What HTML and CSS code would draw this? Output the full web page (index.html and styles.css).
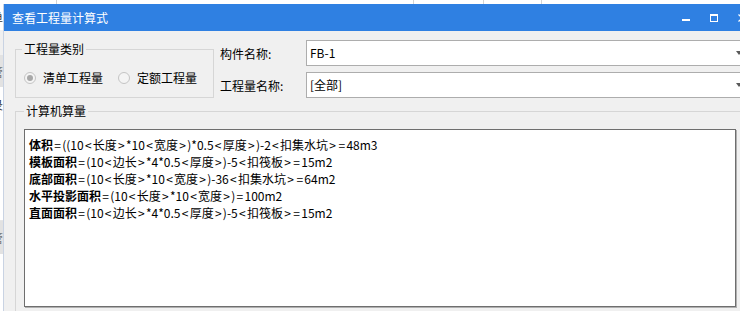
FILE: index.html
```html
<!DOCTYPE html>
<html lang="zh-CN">
<head>
<meta charset="utf-8">
<title>查看工程量计算式</title>
<link rel="stylesheet" href="styles.css">
</head>
<body>
<div class="screen">
  <div class="topstrip">
    <span class="tcell tc1"></span>
    <span class="tcell tc2"></span>
    <span class="tcell tc3"></span>
    <span class="tcell tc4"></span>
    <span class="tcell tc5"></span>
  </div>
  <div class="leftstrip">
    <div class="lblock lb1"><div class="frag"><span>单</span></div></div>
    <div class="lblock lb2"></div>
    <div class="lblock lb3"><div class="frag"><span>管</span></div></div>
    <div class="lblock lb4"><div class="frag fragtop"><span>录</span></div></div>
    <div class="lblock lb5"><div class="frag"><span>管</span></div></div>
    <div class="lblock lb6"></div>
  </div>
  <div class="dialog">
    <div class="titlebar">
      <span class="title">查看工程量计算式</span>
      <div class="controls">
        <span class="ctl"><span class="ico-min"></span></span>
        <span class="ctl"><span class="ico-max"></span></span>
        <span class="ctl"><svg class="ico-close" width="9" height="8" viewBox="0 0 9 8"><path d="M0.5 0.5 L8.5 7.5 M8.5 0.5 L0.5 7.5" stroke="#fff" stroke-width="1.3" fill="none"/></svg></span>
      </div>
    </div>
    <div class="content">
      <div class="row1">
        <fieldset class="group g1">
          <legend>工程量类别</legend>
          <div class="radios">
            <span class="radio checked"></span><span class="rlabel">清单工程量</span>
            <span class="radio r2"></span><span class="rlabel">定额工程量</span>
          </div>
        </fieldset>
        <div class="fields">
          <span class="flabel">构件名称:</span>
          <div class="combo"><span class="cval">FB-1</span><span class="arrow"></span></div>
          <span class="flabel">工程量名称:</span>
          <div class="combo"><span class="cval">[全部]</span><span class="arrow"></span></div>
        </div>
      </div>
      <fieldset class="group g2">
        <legend>计算机算量</legend>
        <div class="textbox">
          <div class="line"><b>体积</b><i class="o">=</i>((10<i class="o">&lt;</i>长度<i class="o">&gt;</i>*10<i class="o">&lt;</i>宽度<i class="o">&gt;</i>)*0.5<i class="o">&lt;</i>厚度<i class="o">&gt;</i>)-2<i class="o">&lt;</i>扣集水坑<i class="o">&gt;</i><i class="o">=</i>48m3</div>
          <div class="line"><b>模板面积</b><i class="o">=</i>(10<i class="o">&lt;</i>边长<i class="o">&gt;</i>*4*0.5<i class="o">&lt;</i>厚度<i class="o">&gt;</i>)-5<i class="o">&lt;</i>扣筏板<i class="o">&gt;</i><i class="o">=</i>15m2</div>
          <div class="line"><b>底部面积</b><i class="o">=</i>(10<i class="o">&lt;</i>长度<i class="o">&gt;</i>*10<i class="o">&lt;</i>宽度<i class="o">&gt;</i>)-36<i class="o">&lt;</i>扣集水坑<i class="o">&gt;</i><i class="o">=</i>64m2</div>
          <div class="line"><b>水平投影面积</b><i class="o">=</i>(10<i class="o">&lt;</i>长度<i class="o">&gt;</i>*10<i class="o">&lt;</i>宽度<i class="o">&gt;</i>)<i class="o">=</i>100m2</div>
          <div class="line"><b>直面面积</b><i class="o">=</i>(10<i class="o">&lt;</i>边长<i class="o">&gt;</i>*4*0.5<i class="o">&lt;</i>厚度<i class="o">&gt;</i>)-5<i class="o">&lt;</i>扣筏板<i class="o">&gt;</i><i class="o">=</i>15m2</div>
        </div>
      </fieldset>
    </div>
  </div>
</div>
</body>
</html>
```
FILE: styles.css
```css
html, body {
  margin: 0;
  padding: 0;
}
body {
  width: 740px;
  height: 311px;
  overflow: hidden;
  background: #ffffff;
  font-family: "Noto Sans CJK SC", "Noto Sans", sans-serif;
  font-size: 12px;
  color: #000;
}
.screen {
  display: grid;
  grid-template-columns: 4px 752px;
  grid-template-rows: 4px 340px;
}
.topstrip {
  grid-column: 1 / -1;
  display: flex;
  background: #fff;
}
.tcell {
  height: 4px;
  border-right: 1px solid #d4d4d4;
  flex: none;
}
.tc1 { width: 56px; }
.tc2 { width: 356px; }
.tc3 { width: 69px; }
.tc4 { width: 57px; }
.tc5 { flex: 1; border-right: 0; }

.leftstrip {
  display: flex;
  flex-direction: column;
  border-right: 1px solid #c9d3e3;
  box-sizing: border-box;
  overflow: hidden;
}
.lblock { flex: none; overflow: hidden; }
.lb1 { height: 26px; background: #fff; }
.lb2 { height: 25px; background: #f0f0f0; }
.lb3 { height: 32px; background: #e2e2e2; }
.lb4 { height: 133px; background: #fff; border-bottom: 1px solid #e6e6e6; }
.lb5 { height: 33px; background: #e2e2e2; }
.lb6 { flex: 1; background: #fff; }
.frag {
  display: flex;
  justify-content: flex-end;
  overflow: hidden;
  height: 100%;
  align-items: center;
  font-size: 12px;
  color: #333;
  white-space: nowrap;
}
.fragtop { align-items: flex-start; padding-top: 9px; height: auto; }
.lb3 .frag, .lb5 .frag { color: #777; }

.dialog {
  background: #f0f0f0;
  display: flex;
  flex-direction: column;
}
.titlebar {
  height: 27px;
  background: #2f80e2;
  color: #fff;
  display: flex;
  align-items: center;
  padding-left: 8px;
}
.title {
  font-size: 12px;
  line-height: 16px;
}
.controls {
  margin-left: auto;
  display: flex;
  height: 27px;
}
.ctl {
  width: 28px;
  height: 27px;
  display: flex;
  justify-content: center;
  align-items: flex-start;
}
.ico-min {
  width: 8px;
  height: 2px;
  background: #fff;
  margin-top: 15px;
}
.ico-max {
  width: 6px;
  height: 5px;
  border: 1px solid #fff;
  border-top-width: 2px;
  margin-top: 10px;
}
.ico-close {
  margin-top: 10px;
  display: block;
}

.content {
  padding: 9px 8px 0 11px;
  display: flex;
  flex-direction: column;
}
.row1 {
  display: flex;
  align-items: flex-start;
}
.group {
  margin: 0;
  border: 1px solid #d6d6d6;
  min-width: 0;
  box-sizing: border-box;
}
.group legend {
  padding: 0 2px;
  line-height: 16px;
  font-size: 12px;
}
.g1 {
  width: 199px;
  margin-top: 1px;
  padding: 12px 6px 10px 6px;
  flex: none;
}
.radios {
  display: flex;
  align-items: center;
  height: 18px;
  padding-left: 2px;
}
.radio {
  width: 12px;
  height: 12px;
  box-sizing: border-box;
  border: 1px solid #c4c4c4;
  border-radius: 50%;
  background: #f4f4f4;
  flex: none;
  display: flex;
  align-items: center;
  justify-content: center;
}
.radio.checked::after {
  content: "";
  width: 6px;
  height: 6px;
  border-radius: 50%;
  background: #a8a8a8;
}
.r2 { margin-left: 15px; }
.rlabel {
  margin-left: 7px;
  line-height: 18px;
}

.fields {
  flex: 1;
  margin-left: 6px;
  display: grid;
  grid-template-columns: 86px 1fr;
  grid-auto-rows: 26px;
  row-gap: 6px;
  align-items: center;
}
.flabel {
  line-height: 16px;
  padding-top: 1px;
}
.combo {
  height: 26px;
  box-sizing: border-box;
  border: 1px solid #adadad;
  background: #fff;
  display: flex;
  align-items: center;
  padding-left: 3px;
}
.cval {
  flex: 1;
  line-height: 16px;
}
.arrow {
  width: 0;
  height: 0;
  border-left: 3.5px solid transparent;
  border-right: 3.5px solid transparent;
  border-top: 4px solid #5a5a5a;
  margin-right: 5px;
}

.g2 {
  margin-top: 5px;
  padding: 10px 11px 0 8px;
  height: 240px;
}
.textbox {
  height: 178px;
  box-sizing: border-box;
  border: 1px solid #6e6e6e;
  box-shadow: 1px 1px 0 #b0b0b0;
  background: #fff;
  padding: 6px 4px;
}
.line {
  line-height: 17px;
  white-space: nowrap;
}
.line b { font-weight: 700; }
.line .o {
  font-style: normal;
  margin: 0 1.25px;
}
```
